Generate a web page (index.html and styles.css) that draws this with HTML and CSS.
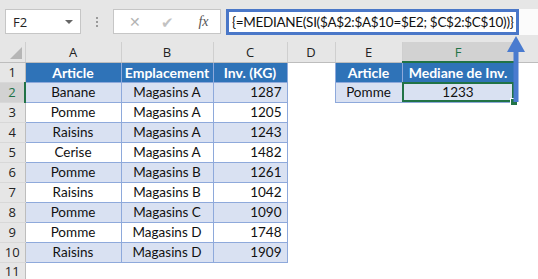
FILE: index.html
```html
<!DOCTYPE html>
<html lang="fr">
<head>
  <meta charset="UTF-8" />
  <title>MEDIANE SI</title>
  <link rel="stylesheet" href="styles.css">
</head>
<body>

  <!-- Formula bar -->
  <div class="toolbar">
    <div class="namebox"><span>F2</span><span class="caret"></span></div>
    <div class="dots"><i></i><i></i><i></i></div>
    <div class="fxbox">
      <span class="fx-btn cancel">&#x2715;</span>
      <span class="fx-btn ok">&#x2714;</span>
      <span class="fx-btn fx">fx</span>
    </div>
    <div class="formula-wrap">
      <div class="formula">{=MEDIANE(SI($A$2:$A$10=$E2; $C$2:$C$10))}</div>
    </div>
  </div>

  <!-- Sheet -->
  <table class="sheet">
    <colgroup>
      <col class="c-row"><col class="c-a"><col class="c-b"><col class="c-c">
      <col class="c-d"><col class="c-e"><col class="c-f"><col>
    </colgroup>
    <tr class="col-heads">
      <th class="corner"><span class="tri"></span></th>
      <th>A</th><th>B</th><th>C</th><th>D</th><th>E</th><th class="sel">F</th><th></th>
    </tr>
    <tr>
      <th class="rn">1</th>
      <td class="hd">Article</td><td class="hd">Emplacement</td><td class="hd">Inv. (KG)</td>
      <td></td>
      <td class="hd">Article</td><td class="hd">Mediane de Inv.</td><td></td>
    </tr>
    <tr class="band">
      <th class="rn sel">2</th>
      <td class="b">Banane</td><td class="b">Magasins A</td><td class="b num">1287</td>
      <td></td>
      <td class="b">Pomme</td><td class="b active">1233<span class="handle"></span></td><td></td>
    </tr>
    <tr>
      <th class="rn">3</th>
      <td class="b">Pomme</td><td class="b">Magasins A</td><td class="b num">1205</td><td colspan="4"></td>
    </tr>
    <tr class="band">
      <th class="rn">4</th>
      <td class="b">Raisins</td><td class="b">Magasins A</td><td class="b num">1243</td><td colspan="4"></td>
    </tr>
    <tr>
      <th class="rn">5</th>
      <td class="b">Cerise</td><td class="b">Magasins A</td><td class="b num">1482</td><td colspan="4"></td>
    </tr>
    <tr class="band">
      <th class="rn">6</th>
      <td class="b">Pomme</td><td class="b">Magasins B</td><td class="b num">1261</td><td colspan="4"></td>
    </tr>
    <tr>
      <th class="rn">7</th>
      <td class="b">Raisins</td><td class="b">Magasins B</td><td class="b num">1042</td><td colspan="4"></td>
    </tr>
    <tr class="band">
      <th class="rn">8</th>
      <td class="b">Pomme</td><td class="b">Magasins C</td><td class="b num">1090</td><td colspan="4"></td>
    </tr>
    <tr>
      <th class="rn">9</th>
      <td class="b">Pomme</td><td class="b">Magasins D</td><td class="b num">1748</td><td colspan="4"></td>
    </tr>
    <tr class="band">
      <th class="rn">10</th>
      <td class="b">Raisins</td><td class="b">Magasins D</td><td class="b num">1909</td><td colspan="4"></td>
    </tr>
    <tr>
      <th class="rn last">11</th>
      <td colspan="7"></td>
    </tr>
  </table>

  <!-- Annotation arrow -->
  <svg class="arrow" width="18" height="66" viewBox="0 0 18 66">
    <polygon points="9,0 18,16 0,16" fill="#4a7bcf"/>
    <rect x="6.5" y="15" width="5" height="51" fill="#4a7bcf"/>
  </svg>

</body>
</html>
```

FILE: styles.css
```css
body { margin: 0; background: #fff; width: 538px; height: 279px; overflow: hidden; position: relative; font-family: "Open Sans", "Noto Sans", sans-serif; }

/* formula bar */
.toolbar { height: 42px; background: #e6e6e6; display: flex; align-items: flex-start; padding: 9px 0 0 5px; box-sizing: border-box; }
.namebox { width: 76px; height: 25px; box-sizing: border-box; background: #fff; border: 1px solid #c6c6c6; display: flex; align-items: center; justify-content: space-between; padding: 0 7px 0 7px; font-size: 13px; color: #222; }
.caret { width: 0; height: 0; border-left: 4px solid transparent; border-right: 4px solid transparent; border-top: 4px solid #666; }
.dots { width: 32px; height: 25px; display: flex; flex-direction: column; align-items: center; justify-content: center; gap: 2px; }
.dots i { width: 2px; height: 2px; background: #9a9a9a; }
.fxbox { width: 108px; height: 25px; box-sizing: border-box; background: #fff; border: 1px solid #c6c6c6; display: flex; align-items: center; font-size: 13px; color: #b4b4b4; }
.fx-btn { width: 34px; text-align: center; }
.fx-btn.cancel { margin-left: 4px; font-size: 14px; }
.fx-btn.ok { font-size: 15px; color: #c2c2c2; }
.fx-btn.fx { font-family: "Liberation Serif", serif; font-style: italic; color: #555; font-size: 14px; margin-left: 3px; }
.formula-wrap { flex: 1; height: 26px; margin-left: 5px; background: #fbfbfb; }
.formula { width: 293px; height: 26px; box-sizing: border-box; border: 3px solid #4a77c8; background: #fff; font-family: "Lato", sans-serif; font-size: 13.5px; letter-spacing: -0.3px; line-height: 20px; padding-left: 3px; color: #111; white-space: nowrap; overflow: hidden; }

/* sheet grid */
.sheet { border-collapse: collapse; table-layout: fixed; width: 538px; font-family: "Lato", sans-serif; font-size: 13.5px; color: #111; }
.c-row { width: 25px; } .c-a { width: 96px; } .c-b { width: 92px; } .c-c { width: 74px; }
.c-d { width: 48px; } .c-e { width: 67px; } .c-f { width: 112px; }
.sheet td, .sheet th { height: 20px; padding: 0; box-sizing: border-box; }
.col-heads th { height: 20px; background: #e6e6e6; font-family: "Open Sans", sans-serif; font-weight: normal; font-size: 13px; color: #222; border-left: 1px solid #cfcfcf; border-bottom: 1px solid #bdbdbd; }
.col-heads th.sel { background: #d2d2d2; color: #217346; border-bottom: 2px solid #217346; }
.corner { position: relative; border-left: none !important; }
.tri { position: absolute; right: 3px; bottom: 3px; width: 0; height: 0; border-left: 12px solid transparent; border-bottom: 12px solid #b6b6b6; }
.rn { background: #e6e6e6; font-family: "Open Sans", sans-serif; font-weight: normal; font-size: 13px; color: #222; border-right: 1px solid #bdbdbd; border-bottom: 1px solid #d8d8d8; }
.rn.sel { background: #d2d2d2; color: #217346; border-right: 2px solid #217346; }
.rn.last { vertical-align: top; line-height: 17px; }

.hd { background: #2f73b8; color: #fff; font-weight: bold; text-align: center; border: 1px solid #8ea9db; font-size: 14px; }
.b { text-align: center; border: 1px solid #8ea9db; }
.band .b { background: #d9e1f2; }
.num { text-align: right; padding-right: 5px !important; }
.active { position: relative; outline: 2px solid #217346; outline-offset: -2px; }
.handle { position: absolute; right: -4px; bottom: -4px; width: 6px; height: 6px; background: #217346; border: 1px solid #fff; }

.arrow { position: absolute; left: 507px; top: 36px; }
```
